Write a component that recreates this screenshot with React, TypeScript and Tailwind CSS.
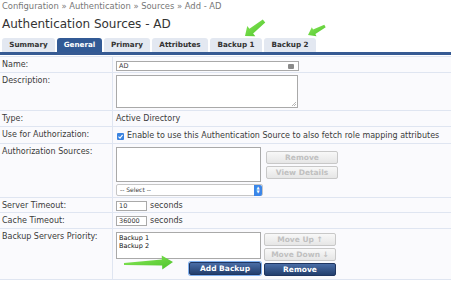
import React from 'react';

const font = { fontFamily: '"DejaVu Sans", Verdana, sans-serif' };

type Pt = [number, number];

const arrowPoints = (tail: Pt, tip: Pt, tailW: number, shaftW: number, headW: number, headL: number) => {
  const dx = tip[0] - tail[0];
  const dy = tip[1] - tail[1];
  const len = Math.hypot(dx, dy);
  const ux = dx / len;
  const uy = dy / len;
  const nx = -uy;
  const ny = ux;
  const bx = tip[0] - ux * headL;
  const by = tip[1] - uy * headL;
  const p = (x: number, y: number, o: number) => `${x + nx * o},${y + ny * o}`;
  return [
    p(tail[0], tail[1], tailW / 2),
    p(bx, by, shaftW / 2),
    p(bx, by, headW / 2),
    `${tip[0]},${tip[1]}`,
    p(bx, by, -headW / 2),
    p(bx, by, -shaftW / 2),
    p(tail[0], tail[1], -tailW / 2),
  ].join(' ');
};

const Arrows: React.FC = () => (
  <svg className="pointer-events-none absolute left-0 top-0" width="451" height="281">
    <defs>
      <linearGradient id="g" x1="0" y1="0" x2="1" y2="1">
        <stop offset="0" stopColor="#8be85a" />
        <stop offset="1" stopColor="#4cc32a" />
      </linearGradient>
    </defs>
    <polygon points={arrowPoints([264, 21], [245, 36], 4, 6, 13, 8)} fill="url(#g)" />
    <polygon points={arrowPoints([325, 26], [308, 35], 3, 5, 10, 7)} fill="url(#g)" />
    <polygon points={arrowPoints([124, 264], [173, 262], 2, 6, 14, 11)} fill="url(#g)" />
  </svg>
);

const tabs = [
  { label: 'Summary', w: 'w-[53px]' },
  { label: 'General', w: 'w-[45px]', active: true },
  { label: 'Primary', w: 'w-[46px]' },
  { label: 'Attributes', w: 'w-[56px]' },
  { label: 'Backup 1', w: 'w-[52px]' },
  { label: 'Backup 2', w: 'w-[52px]' },
];

const Row: React.FC<{ label: string; h: string; children?: React.ReactNode }> = ({ label, h, children }) => (
  <div className={`grid grid-cols-[113px_1fr] border-b border-[#dfe5f1] ${h}`}>
    <div className="border-r border-[#dfe5f1] pl-[2px] pt-[3px] text-[8px] leading-[10px] text-[#3a3a3a]">{label}</div>
    <div className="pl-[3px] text-[8px] leading-[10px] text-[#3a3a3a]">{children}</div>
  </div>
);

const GrayBtn: React.FC<{ children: React.ReactNode }> = ({ children }) => (
  <div className="flex h-[13px] w-[72px] items-center justify-center rounded-[2px] border border-[#c8c8c8] bg-gradient-to-b from-[#f8f8f8] to-[#e6e6e6] text-[7.5px] font-bold text-[#c0c0c0]">
    {children}
  </div>
);

const BlueBtn: React.FC<{ children: React.ReactNode; focus?: boolean }> = ({ children, focus }) => (
  <div
    className={`flex h-[13px] w-[72px] items-center justify-center rounded-[2px] border border-[#1f3560] bg-gradient-to-b from-[#4a6da6] to-[#233f6e] text-[7.5px] font-bold text-white ${
      focus ? 'ring-1 ring-[#7fb0f0]' : ''
    }`}
  >
    {children}
  </div>
);

export default function App() {
  return (
    <div className="relative h-[281px] w-[451px] overflow-hidden bg-white" style={font}>
      <div className="pl-[2px] pt-[1px] text-[8.4px] leading-[11px] text-[#777]">
        Configuration » Authentication » Sources » Add - AD
      </div>
      <div className="pl-[2px] pt-[4px] text-[12px] leading-[16px] text-[#333]">Authentication Sources - AD</div>

      <div className="mt-[6px] flex gap-[2px] pl-[2px]">
        {tabs.map(t => (
          <div
            key={t.label}
            className={`flex h-[14px] ${t.w} items-center justify-center rounded-t-[3px] text-[7.2px] font-bold ${
              t.active ? 'bg-[#325a95] text-white' : 'bg-[#e3e8f1] text-[#333]'
            }`}
          >
            {t.label}
          </div>
        ))}
      </div>
      <div className="h-[3px] bg-[#365a93]" />
      <div className="mt-[1px] h-[1px] bg-[#dfe5f1]" />

      <div className="bg-[#fafafd]">
        <Row label="Name:" h="h-[16px]">
          <div className="mt-[4px] flex h-[10px] w-[183px] items-center justify-between border border-[#a9a9a9] bg-white pl-[2px] pr-[4px] text-[6.5px]">
            <span>AD</span>
            <span className="h-[5px] w-[6px] rounded-[1px] bg-[#8a8a8a]" />
          </div>
        </Row>
        <Row label="Description:" h="h-[38px]">
          <div className="relative mt-[2px] h-[33px] w-[182px] border border-[#a9a9a9] bg-white">
            <svg className="absolute bottom-[1px] right-[1px]" width="5" height="5">
              <path d="M1 5 L5 1 M3 5 L5 3" stroke="#999" strokeWidth="0.7" />
            </svg>
          </div>
        </Row>
        <Row label="Type:" h="h-[16px]">
          <div className="pt-[3px]">Active Directory</div>
        </Row>
        <Row label="Use for Authorization:" h="h-[17px]">
          <div className="flex items-center gap-[3px] pt-[4px] pl-[1px]">
            <svg width="7" height="7" viewBox="0 0 7 7">
              <rect x="0" y="0" width="7" height="7" rx="1" fill="#3a83e0" />
              <path d="M1.5 3.7 L3 5.1 L5.6 1.9" stroke="white" strokeWidth="1.1" fill="none" />
            </svg>
            <span>Enable to use this Authentication Source to also fetch role mapping attributes</span>
          </div>
        </Row>
        <Row label="Authorization Sources:" h="h-[54px]">
          <div className="flex gap-[3px] pt-[3px]">
            <div className="flex flex-col gap-[2px]">
              <div className="h-[35px] w-[145px] border border-[#a9a9a9] bg-white" />
              <div className="flex h-[12px] w-[147px] items-center justify-between rounded-[2px] border border-[#c6c6c6] bg-white pl-[3px] text-[6px]">
                <span>-- Select --</span>
                <span className="flex h-[11px] w-[8px] flex-col items-center justify-center rounded-r-[2px] bg-[#3b86e8] text-[4px] leading-[4px] text-white">
                  <span>▲</span>
                  <span>▼</span>
                </span>
              </div>
            </div>
            <div className="mt-[4px] flex flex-col gap-[2px]">
              <GrayBtn>Remove</GrayBtn>
              <GrayBtn>View Details</GrayBtn>
            </div>
          </div>
        </Row>
        <Row label="Server Timeout:" h="h-[15px]">
          <div className="flex items-center gap-[3px] pt-[3px]">
            <div className="h-[10px] w-[31px] border border-[#a9a9a9] bg-white pl-[2px] text-[6.5px] leading-[8px]">10</div>
            <span>seconds</span>
          </div>
        </Row>
        <Row label="Cache Timeout:" h="h-[16px]">
          <div className="flex items-center gap-[3px] pt-[3px]">
            <div className="h-[10px] w-[31px] border border-[#a9a9a9] bg-white pl-[2px] text-[6.5px] leading-[8px]">36000</div>
            <span>seconds</span>
          </div>
        </Row>
        <Row label="Backup Servers Priority:" h="h-[51px]">
          <div className="flex gap-[3px] pt-[3px]">
            <div className="flex flex-col items-end gap-[3px]">
              <div className="h-[27px] w-[145px] border border-[#a9a9a9] bg-white pl-[2px] pt-[1px] text-[6.5px] leading-[8px] text-[#111]">
                <div>Backup 1</div>
                <div>Backup 2</div>
              </div>
              <BlueBtn focus>Add Backup</BlueBtn>
            </div>
            <div className="flex flex-col gap-[2px] pt-[1px]">
              <GrayBtn>Move Up ↑</GrayBtn>
              <GrayBtn>Move Down ↓</GrayBtn>
              <BlueBtn>Remove</BlueBtn>
            </div>
          </div>
        </Row>
      </div>
      <Arrows />
    </div>
  );
}
